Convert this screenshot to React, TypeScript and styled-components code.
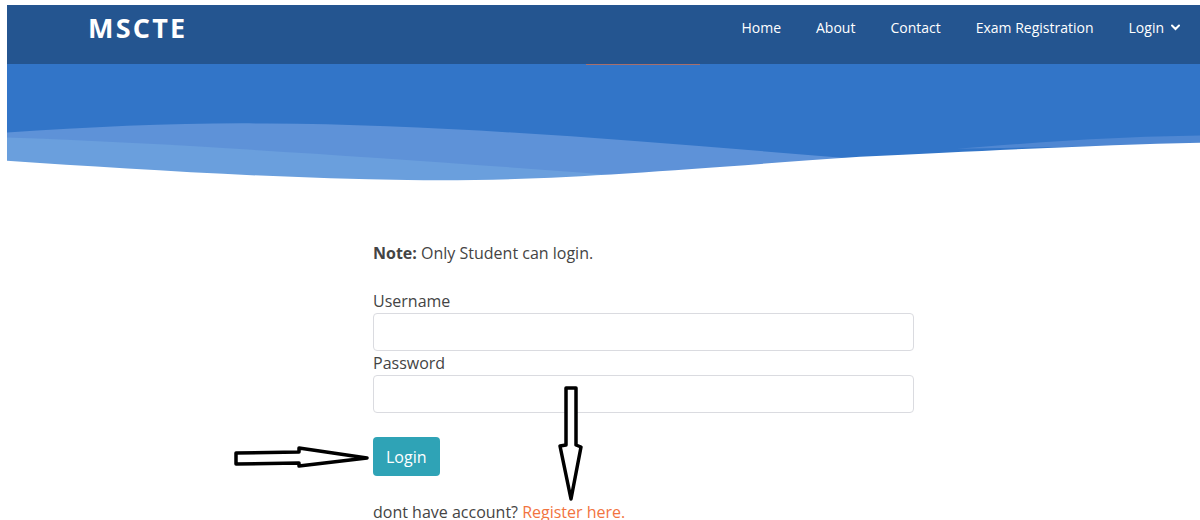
import * as React from 'react';
import styled, { createGlobalStyle } from 'styled-components';

const HEADER_BG = '#245590';
const HERO_BG = '#3275c8';
const TEXT = '#444444';

const GlobalStyle = createGlobalStyle`
  html, body {
    margin: 0;
    padding: 0;
    background: #fff;
  }
  body {
    font-family: 'Open Sans', 'Liberation Sans', sans-serif;
    color: ${TEXT};
  }
  * {
    box-sizing: border-box;
  }
`;

const Page = styled.div`
  position: relative;
  width: 1200px;
  height: 520px;
  overflow: hidden;
  padding: 5px 0 0 7px;
`;

const Header = styled.header`
  display: flex;
  align-items: center;
  justify-content: space-between;
  height: 59px;
  padding: 0 20px 14px 81px;
  background: ${HEADER_BG};
`;

const Brand = styled.a`
  font-family: 'Open Sans', sans-serif;
  font-weight: 700;
  font-size: 27px;
  letter-spacing: 2.2px;
  color: #fff;
  text-decoration: none;
`;

const Nav = styled.nav`
  display: flex;
  align-items: center;
  gap: 35px;
`;

const NavLink = styled.a`
  display: flex;
  align-items: center;
  gap: 7px;
  font-size: 14px;
  font-weight: 500;
  color: #fff;
  text-decoration: none;
`;

const Hero = styled.section`
  height: 118px;
  background: ${HERO_BG};
  display: flex;
  flex-direction: column;
`;

const ActiveMark = styled.div`
  width: 114px;
  height: 1px;
  margin-left: 579px;
  background: #a86f6c;
`;

const Wave = styled.svg`
  display: block;
  width: 100%;
  flex: 1;
  margin-top: -1px;
`;

const FormColumn = styled.form`
  width: 541px;
  margin: 59px 0 0 366px;
  display: flex;
  flex-direction: column;
  font-size: 16px;
  line-height: 24px;
`;

const Note = styled.p`
  margin: 0 0 24px;
`;

const Label = styled.label`
  display: block;
`;

const Input = styled.input`
  display: block;
  width: 100%;
  height: 38px;
  border: 1px solid #dadbe0;
  border-radius: 4px;
  padding: 6px 12px;
  font: inherit;
  outline: none;
`;

const SubmitButton = styled.button`
  align-self: flex-start;
  margin-top: 24px;
  height: 39px;
  padding: 0 13px;
  border: none;
  border-radius: 4px;
  background: #2fa3b6;
  color: #fff;
  font-family: inherit;
  font-size: 16px;
`;

const Footnote = styled.p`
  margin: 24px 0 0;
`;

const RegisterLink = styled.a`
  color: #f2743f;
  text-decoration: none;
`;

const Annotations = styled.svg`
  position: absolute;
  left: 0;
  top: 0;
  pointer-events: none;
`;

const ChevronDown = () => (
  <svg width="9" height="7" viewBox="0 0 9 7">
    <path d="M1 1.5 L4.5 5 L8 1.5" fill="none" stroke="#fff" strokeWidth="2" strokeLinecap="round" />
  </svg>
);

export default function App() {
  return (
    <>
      <GlobalStyle />
      <Page>
        <Header>
          <Brand href="#">MSCTE</Brand>
          <Nav>
            <NavLink href="#">Home</NavLink>
            <NavLink href="#">About</NavLink>
            <NavLink href="#">Contact</NavLink>
            <NavLink href="#">Exam Registration</NavLink>
            <NavLink href="#">
              Login <ChevronDown />
            </NavLink>
          </Nav>
        </Header>

        <Hero>
          <ActiveMark />
          <Wave viewBox="0 0 1193 117" preserveAspectRatio="none">
            <path d="M0 68 C 90 62 180 58 260 59 C 450 60 650 78 860 95 L 860 117 L 0 117 Z" fill="#5e92d8" />
            <path d="M0 73 C 200 80 420 96 700 117 L 0 117 Z" fill="#6a9fdd" />
            <path d="M950 84 C 1050 76 1120 72 1193 71 L 1193 80 Z" fill="#4f87d2" />
            <path d="M0 96 C 120 104 260 113 400 115 C 540 117 650 106 853 92 C 1000 85 1100 80 1193 78 L 1193 117 L 0 117 Z" fill="#fff" />
          </Wave>
        </Hero>

        <FormColumn onSubmit={(e) => e.preventDefault()}>
          <Note>
            <strong>Note:</strong> Only Student can login.
          </Note>
          <Label htmlFor="username">Username</Label>
          <Input id="username" type="text" />
          <Label htmlFor="password">Password</Label>
          <Input id="password" type="password" />
          <SubmitButton type="submit">Login</SubmitButton>
          <Footnote>
            dont have account? <RegisterLink href="#">Register here.</RegisterLink>
          </Footnote>
        </FormColumn>

        <Annotations width="1200" height="520" viewBox="0 0 1200 520">
          <polygon
            points="236,453 299,452 299,448 367,458 299,466 299,463 236,464"
            fill="#fff"
            stroke="#000"
            strokeWidth="3.5"
            strokeLinejoin="round"
          />
          <polygon
            points="566,388 576,388 576,445 581,447 571,499 560,446 566,445"
            fill="#fff"
            stroke="#000"
            strokeWidth="3.5"
            strokeLinejoin="round"
          />
        </Annotations>
      </Page>
    </>
  );
}
